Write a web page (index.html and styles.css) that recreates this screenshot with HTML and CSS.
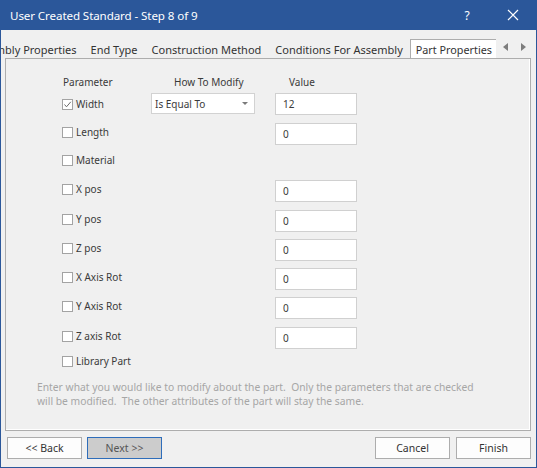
FILE: index.html
```html
<!DOCTYPE html>
<html>
<head>
<meta charset="utf-8">
<link rel="stylesheet" href="styles.css">
</head>
<body>
<div class="window">
  <div class="titlebar">
    <span class="title">User Created Standard - Step 8 of 9</span>
    <div class="controls">
      <span class="help">?</span>
      <svg class="close" width="12" height="12" viewBox="0 0 12 12"><path d="M1 1L11 11M11 1L1 11" stroke="#fff" stroke-width="1.2" fill="none"/></svg>
    </div>
  </div>
  <div class="tabstrip">
    <div class="tabs">
      <div class="tab first">Assembly Properties</div>
      <div class="tab">End Type</div>
      <div class="tab">Construction Method</div>
      <div class="tab">Conditions For Assembly</div>
      <div class="tab active">Part Properties</div>
    </div>
    <div class="scroller">
      <svg width="8" height="10" viewBox="0 0 8 10"><path d="M6 1L1 5L6 9Z" fill="#7d7d7d"/></svg>
      <svg width="8" height="10" viewBox="0 0 8 10"><path d="M2 1L7 5L2 9Z" fill="#7d7d7d"/></svg>
    </div>
  </div>
  <div class="panel">
    <div class="grid">
      <div class="head h1">Parameter</div>
      <div class="head h2">How To Modify</div>
      <div class="head h3">Value</div>

      <label class="param first-row"><span class="box checked"><svg width="9" height="9" viewBox="0 0 9 9"><path d="M1.5 4.5L3.5 6.8L7.8 1.8" stroke="#6a6a6a" stroke-width="1" fill="none"/></svg></span>Width</label>
      <div class="select"><span>Is Equal To</span><svg width="6" height="4" viewBox="0 0 6 4"><path d="M0 0H6L3 3Z" fill="#7a7a7a"/></svg></div>
      <div class="input">12</div>

      <label class="param"><span class="box"></span>Length</label>
      <div></div>
      <div class="input">0</div>

      <label class="param"><span class="box"></span>Material</label>
      <div></div>
      <div></div>

      <label class="param"><span class="box"></span>X pos</label>
      <div></div>
      <div class="input">0</div>

      <label class="param"><span class="box"></span>Y pos</label>
      <div></div>
      <div class="input">0</div>

      <label class="param"><span class="box"></span>Z pos</label>
      <div></div>
      <div class="input">0</div>

      <label class="param"><span class="box"></span>X Axis Rot</label>
      <div></div>
      <div class="input">0</div>

      <label class="param"><span class="box"></span>Y Axis Rot</label>
      <div></div>
      <div class="input">0</div>

      <label class="param"><span class="box"></span>Z axis Rot</label>
      <div></div>
      <div class="input">0</div>

      <label class="param"><span class="box"></span>Library Part</label>
      <div></div>
      <div></div>
    </div>
    <p class="note">Enter what you would like to modify about the part.&nbsp; Only the parameters that are checked<br>will be modified.&nbsp; The other attributes of the part will stay the same.</p>
  </div>
  <div class="buttons">
    <div class="left">
      <button class="btn">&lt;&lt; Back</button>
      <button class="btn next">Next &gt;&gt;</button>
    </div>
    <div class="right">
      <button class="btn">Cancel</button>
      <button class="btn">Finish</button>
    </div>
  </div>
</div>
</body>
</html>
```

FILE: styles.css
```css
* { box-sizing: border-box; }
html, body { margin: 0; padding: 0; }
body {
  width: 537px;
  height: 468px;
  font-family: "Noto Sans", "Segoe UI", sans-serif;
  color: #3a3a3a;
  background: #f0f0f0;
}
.window {
  width: 537px;
  height: 468px;
  border: 1px solid #2b579a;
  border-top: none;
  background: #f0f0f0;
  display: flex;
  flex-direction: column;
}
.titlebar {
  height: 30px;
  flex: none;
  background: #2b579a;
  display: flex;
  align-items: center;
  justify-content: space-between;
  padding-left: 9px;
  color: #fff;
}
.title {
  font-size: 11.6px;
  letter-spacing: -0.1px;
}
.controls {
  display: flex;
  align-items: center;
}
.help {
  font-size: 12px;
  width: 14px;
  text-align: center;
  margin-right: 33px;
}
.close { margin-right: 17px; }

.tabstrip {
  height: 28px;
  flex: none;
  display: flex;
  align-items: flex-end;
  position: relative;
  z-index: 1;
}
.tabs {
  flex: 1;
  display: flex;
  align-items: flex-end;
  overflow: hidden;
  height: 28px;
}
.tab {
  flex: none;
  font-size: 11px;
  height: 18px;
  line-height: 19px;
  padding: 0 7px;
  color: #333;
  white-space: nowrap;
}
.tab.first { margin-left: -37px; }
.tab.active {
  background: #fff;
  border: 1px solid #adadad;
  border-bottom: none;
  height: 20px;
  line-height: 20px;
  padding: 0 4px 0 5px;
  font-size: 10.8px;
  margin-left: 0;
  margin-bottom: -1px;
}
.scroller {
  width: 40px;
  height: 28px;
  display: flex;
  align-items: center;
  justify-content: flex-start;
  gap: 9px;
  padding-left: 6px;
  padding-top: 5px;
  flex: none;
}

.panel {
  flex: none;
  height: 373px;
  margin: 0 5px 0 4px;
  border: 1px solid #adadad;
  box-shadow: inset -1px -1px 0 #fff;
  padding: 13px 0 0 31px;
}
.grid {
  margin-left: 25px;
  display: grid;
  grid-template-columns: 89px 124px 82px;
  grid-template-rows: 21px 30px 28px 29px 30px 29px 29px 29px 30px 25px 20px;
  font-size: 10px;
}
.head {
  line-height: 21px;
  color: #3a3a3a;
}
.h1 { padding-left: 1px; }
.h2 { padding-left: 23px; }
.h3 { padding-left: 14px; }
.param {
  display: flex;
  align-items: center;
  height: 18px;
  white-space: nowrap;
  color: #3a3a3a;
}
.param.first-row { height: 22px; }
.box {
  width: 11px;
  height: 11px;
  border: 1px solid #a3a3a3;
  background: #fff;
  margin-right: 3px;
  display: flex;
  align-items: center;
  justify-content: center;
}
.select {
  width: 104px;
  height: 21px;
  background: #fff;
  border: 1px solid #d2d2d2;
  display: flex;
  align-items: center;
  justify-content: space-between;
  padding: 0 6px 0 3px;
}
.select svg { margin-top: 1px; }
.input {
  width: 82px;
  height: 22px;
  background: #fff;
  border: 1px solid #d0d0d0;
  line-height: 20px;
  padding-left: 7px;
}
.note {
  margin: 8px 0 0 0;
  font-size: 10.3px;
  line-height: 14px;
  color: #a6a6a6;
  white-space: nowrap;
}
.buttons {
  flex: none;
  margin-top: 6px;
  height: 22px;
  display: flex;
  justify-content: space-between;
  padding: 0 5px 0 6px;
}
.left, .right { display: flex; }
.left { gap: 5px; }
.right { gap: 6px; }
.btn {
  width: 75px;
  height: 22px;
  font-family: "Noto Sans", "Segoe UI", sans-serif;
  font-size: 10.5px;
  color: #333;
  background: #fdfdfd;
  border: 1px solid #adadad;
  padding: 0;
  margin: 0;
}
.btn.next {
  background: #cccccc;
  border-color: #2e6dba;
  color: #555;
}
```
